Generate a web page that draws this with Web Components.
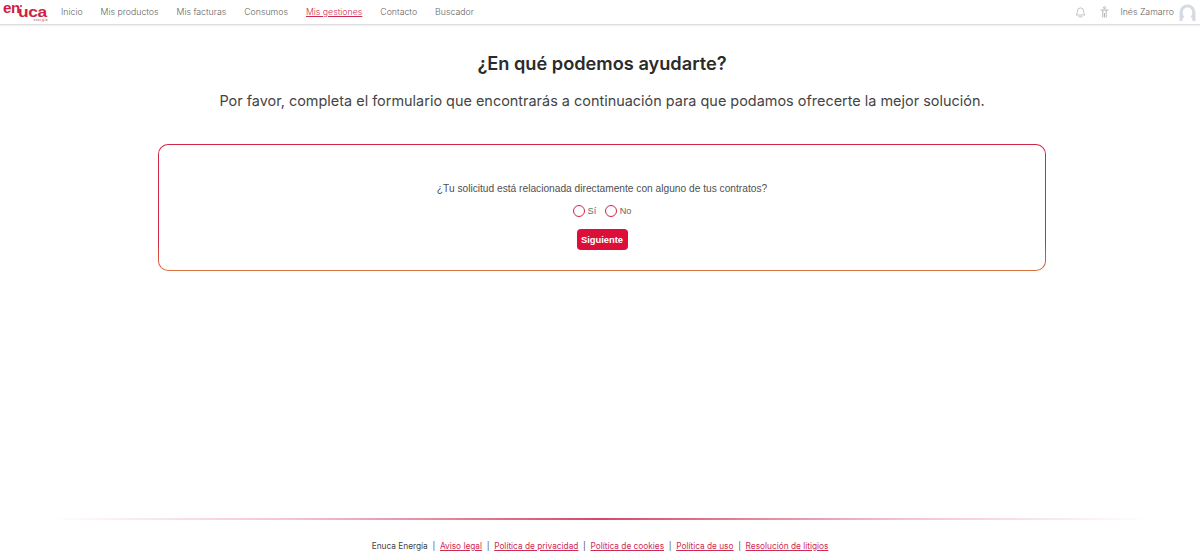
<!DOCTYPE html>
<html lang="es"><head><meta charset="utf-8"><title>Enuca</title>
<style>
html,body{margin:0;height:100%;background:#fff}
body{font-family:Inter,"Noto Sans",sans-serif;overflow:hidden}
app-page{height:560px}
</style></head><body>
<app-page>
  <app-header slot="header"></app-header>
  <help-intro title-text="¿En qué podemos ayudarte?" text="Por favor, completa el formulario que encontrarás a continuación para que podamos ofrecerte la mejor solución."></help-intro>
  <question-card></question-card>
  <app-footer slot="footer"></app-footer>
</app-page>
<script>
function def(name,html){customElements.define(name,class extends HTMLElement{
  constructor(){super();const r=this.attachShadow({mode:'open'});r.innerHTML=typeof html==='function'?html(this):html;}
});}
def('app-page',`<style>:host{display:flex;flex-direction:column;width:1200px}
main{flex:1;display:flex;flex-direction:column;align-items:center;padding-left:4px}</style>
<slot name="header"></slot><main><slot></slot></main><slot name="footer"></slot>`);

def('enuca-logo',`<style>
:host{display:block;width:46px;height:20px;position:relative;font-family:"Liberation Sans",sans-serif;font-weight:700;color:#cf1f45}
b{position:absolute;font-size:14.5px;line-height:14px;transform-origin:left top}
.a{left:1px;top:-1px;letter-spacing:-.5px;transform:scaleX(1.05)}
.b{left:16px;top:3px;letter-spacing:-.3px;transform:scaleX(1.2)}
.d{position:absolute;left:18px;top:3px;width:2px;height:2px;border-radius:50%;background:#cf1f45}
i{position:absolute;right:0;top:16px;font:700 3.2px "Liberation Sans",sans-serif;letter-spacing:.45px;color:#b9788a}
</style><b class="a">en</b><b class="b">uca</b><span class="d"></span><i>energía</i>`);

def('app-header',`<style>
:host{display:flex;align-items:center;height:24px;border-bottom:1px solid #dedede;box-shadow:0 1px 1px #f0f0f0;font:300 8.75px Inter,sans-serif;color:#666;flex:none}
enuca-logo{margin-left:2px;flex:none}
nav{display:flex;gap:18px;margin-left:13px;flex:1}
a{color:inherit;text-decoration:none;white-space:nowrap}
a.on{color:#cf2a52;text-decoration:underline}
.r{display:flex;align-items:center}
svg{display:block}
.u{margin-left:11px}
.av{margin:0 4px 0 5px}
.bell{margin-right:14px}
</style>
<enuca-logo></enuca-logo>
<nav><a>Inicio</a><a>Mis productos</a><a>Mis facturas</a><a>Consumos</a><a class="on">Mis gestiones</a><a>Contacto</a><a>Buscador</a></nav>
<div class="r">
<svg class="bell" width="11" height="12" viewBox="0 0 11 12" fill="none" stroke="#b4b4b4" stroke-width=".8"><path d="M1 9c1-1 1.400-2 1.400-4a3.100 3.100 0 0 1 6.200 0c0 2 .4 3 1.400 4z"/><path d="M3.500 10.800h4"/></svg>
<svg width="9" height="12" viewBox="0 0 9 12" fill="none" stroke="#a6a6a6" stroke-width=".8"><circle cx="4.500" cy="1.700" r="1"/><path d="M.5 4h8M2.800 4v7.500M6.200 4v7.500M4.500 7v4.500"/></svg>
<span class="u">Inés Zamarro</span>
<svg class="av" width="17" height="17" viewBox="0 0 17 17"><path d="M.5 17V8.500a8 8 0 0 1 16 0V17h-3c0-2-.5-3.500-2-4.200 1.200-1 1.700-2.500 1.700-4.300 0-3-2-5-4.700-5s-4.700 2-4.700 5c0 1.800.5 3.300 1.700 4.300-1.500.7-2 2.200-2 4.200z" fill="#d5dbe3"/></svg>
</div>`);

def('help-intro',h=>`<style>
:host{display:block;text-align:center;width:100%}
h1{margin:28px 0 0;font:600 18.2px/20px Inter,sans-serif;color:#2b2b2b}
p{margin:18px 0 0;font:400 14.44px/20px Inter,sans-serif;color:#444}
</style><h1>${h.getAttribute('title-text')}</h1><p>${h.getAttribute('text')}</p>`);

def('question-card',`<style>
:host{display:flex;flex-direction:column;align-items:center;box-sizing:border-box;width:888px;height:127px;margin-top:33px;border:1px solid transparent;border-radius:10px;
background:linear-gradient(#fff,#fff) padding-box,linear-gradient(#cf2747 0%,#cf2747 75%,#d9733f 100%) border-box;padding-top:37px;font-family:"Liberation Sans",Arial,sans-serif}
.q{font-size:10.2px;line-height:14px;color:#505050}
.opts{display:flex;align-items:center;margin-top:8px;font-size:9.2px;color:#666;height:14px}
.opts i{width:10px;height:10px;border:1px solid #cf2747;border-radius:50%;display:block;margin-right:3px;background:#fff}
.opts span{margin-right:8.500px}
.opts span:last-child{margin-right:0}
button{margin-top:11px;width:51px;height:21px;padding:0;border:0;border-radius:4px;background:#dc0f3a;color:#fff;font:700 9.4px "Liberation Sans",Arial,sans-serif}
</style>
<div class="q">¿Tu solicitud está relacionada directamente con alguno de tus contratos?</div>
<div class="opts"><i></i><span>Sí</span><i></i><span>No</span></div>
<button>Siguiente</button>`);

def('app-footer',`<style>
:host{display:block;flex:none;height:42px;font:400 8.3px Inter,sans-serif;color:#444}
.line{height:2px;margin:0 50px;background:linear-gradient(90deg,rgba(216,40,90,0),rgba(216,40,90,.28) 22%,rgba(206,40,80,.85) 50%,rgba(216,40,90,.28) 78%,rgba(216,40,90,0))}
.t{display:flex;justify-content:center;gap:4.700px;margin-top:20px;line-height:12px}
a{color:#cf2a52;text-decoration:underline}
</style>
<div class="line"></div>
<div class="t"><span>Enuca Energía</span><span>|</span><a>Aviso legal</a><span>|</span><a>Política de privacidad</a><span>|</span><a>Política de cookies</a><span>|</span><a>Política de uso</a><span>|</span><a>Resolución de litigios</a></div>`);
</script>
</body></html>
